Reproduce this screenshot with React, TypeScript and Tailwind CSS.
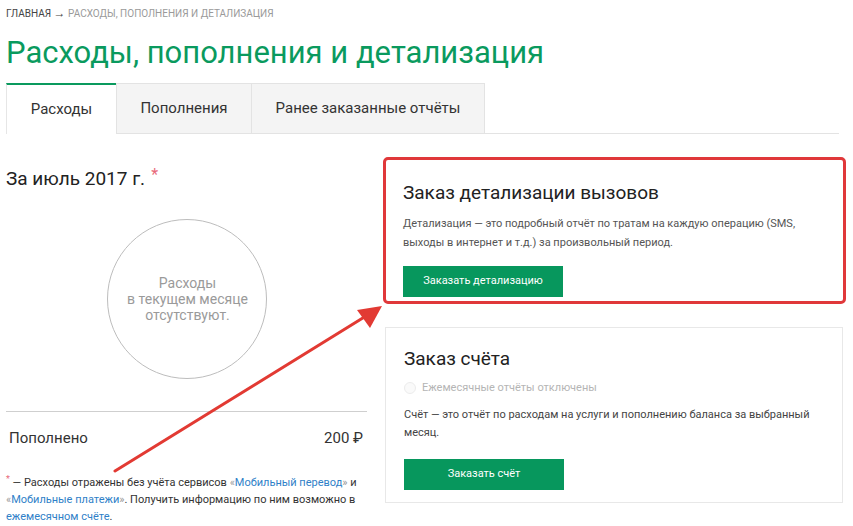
import React from 'react';

const font = { fontFamily: 'Roboto, "Noto Sans", Arial, sans-serif' };

function Tabs() {
  return (
    <div className="mt-[12px] flex h-[51px] items-stretch border-b border-[#e3e3e3] mr-[8px]">
      <div className="flex w-[110px] items-center justify-center border-t-2 border-l border-t-[#0a9a5e] border-l-[#e6e6e6] bg-white text-[15px] text-[#333] -mb-px">
        Расходы
      </div>
      <div className="flex w-[135px] items-center justify-center border-t border-l border-[#e3e3e3] bg-[#f4f4f4] text-[15px] text-[#333]">
        Пополнения
      </div>
      <div className="flex w-[234px] items-center justify-center border-t border-x border-[#e3e3e3] bg-[#f4f4f4] text-[15px] text-[#333]">
        Ранее заказанные отчёты
      </div>
    </div>
  );
}

function LeftColumn() {
  return (
    <div className="w-[361px] shrink-0">
      <div className="mt-[33px] flex items-start text-[19px] leading-[24px] text-[#222]">
        За июль 2017 г.
        <span className="ml-[6px] -mt-[4px] text-[16px] text-[#e86a7a]">*</span>
      </div>
      <div className="mt-[28px] flex justify-center">
        <div className="flex h-[160px] w-[160px] items-center justify-center rounded-full border border-[#bdbdbd] text-center text-[14px] leading-[16px] text-[#9a9a9a]">
          <div className="pl-[2px]">
            Расходы
            <br />в текущем месяце
            <br />отсутствуют.
          </div>
        </div>
      </div>
      <div className="mt-[32px] border-t border-[#cfcfcf]" />
      <div className="mt-[16px] flex items-center justify-between pl-[3px] pr-[4px] text-[15px] leading-[20px] text-[#333]">
        <span>Пополнено</span>
        <span>200 ₽</span>
      </div>
      <p className="mt-[26px] text-[11px] leading-[17px] text-[#333]">
        <sup className="text-[9px] text-[#e86a7a]">*</sup> — Расходы отражены без учёта сервисов{' '}
        <span className="text-[#999]">«</span>
        <span className="text-[#2f7fc8]">Мобильный перевод</span>
        <span className="text-[#999]">»</span> и <span className="text-[#999]">«</span>
        <span className="text-[#2f7fc8]">Мобильные платежи</span>
        <span className="text-[#999]">»</span>. Получить информацию по ним возможно в{' '}
        <span className="text-[#2f7fc8]">ежемесячном счёте</span>.
      </p>
    </div>
  );
}

function DetailCard() {
  return (
    <div className="rounded-[5px] border-[3px] border-[#e0383a] bg-white px-[17px] pt-[20px] pb-[4px] ml-[-2px] mr-[-3px]">
      <h2 className="text-[19px] leading-[26px] text-[#222]">Заказ детализации вызовов</h2>
      <p className="mt-[8px] text-[11px] leading-[19px] text-[#555]">
        Детализация — это подробный отчёт по тратам на каждую операцию (SMS,
        <br />
        выходы в интернет и т.д.) за произвольный период.
      </p>
      <button className="mt-[14px] h-[31px] w-[160px] bg-[#07975d] text-[11px] text-white">
        Заказать детализацию
      </button>
    </div>
  );
}

function InvoiceCard() {
  return (
    <div className="mt-[23px] border border-[#e8e8e8] bg-white px-[18px] pt-[18px] pb-[12px]">
      <h2 className="text-[19px] leading-[26px] text-[#222]">Заказ счёта</h2>
      <div className="mt-[7px] flex items-center gap-[6px] text-[11px] leading-[18px] text-[#b5b5b5]">
        <span className="h-[12px] w-[12px] rounded-full border border-[#ececec] bg-[#fafafa]" />
        Ежемесячные отчёты отключены
      </div>
      <p className="mt-[9px] text-[11px] leading-[18px] text-[#444]">
        Счёт — это отчёт по расходам на услуги и пополнению баланса за выбранный
        <br />
        месяц.
      </p>
      <button className="mt-[17px] h-[31px] w-[160px] bg-[#07975d] text-[11px] text-white">
        Заказать счёт
      </button>
    </div>
  );
}

function Arrow() {
  return (
    <svg className="pointer-events-none absolute left-0 top-0" width="853" height="526" viewBox="0 0 853 526">
      <line x1="115" y1="471" x2="366" y2="316" stroke="#e23a33" strokeWidth="3" strokeLinecap="round" />
      <polygon points="382,306 357,310 370,328" fill="#e23a33" />
    </svg>
  );
}

export default function App() {
  return (
    <div className="relative h-[526px] w-[853px] overflow-hidden bg-white px-[6px]" style={font}>
      <div className="pt-[7px] text-[10px] uppercase leading-[13px] text-[#9a9a9a]">
        <span className="text-[#444]">Главная</span>{' '}
        <span className="text-[12px] text-[#444]">→</span> Расходы, пополнения и детализация
      </div>
      <h1 className="mt-[15px] text-[31px] leading-[36px] text-[#0a9a5e]">Расходы, пополнения и детализация</h1>
      <Tabs />
      <div className="flex gap-[18px]">
        <LeftColumn />
        <div className="mt-[23px] w-[458px]">
          <DetailCard />
          <InvoiceCard />
        </div>
      </div>
      <Arrow />
    </div>
  );
}
